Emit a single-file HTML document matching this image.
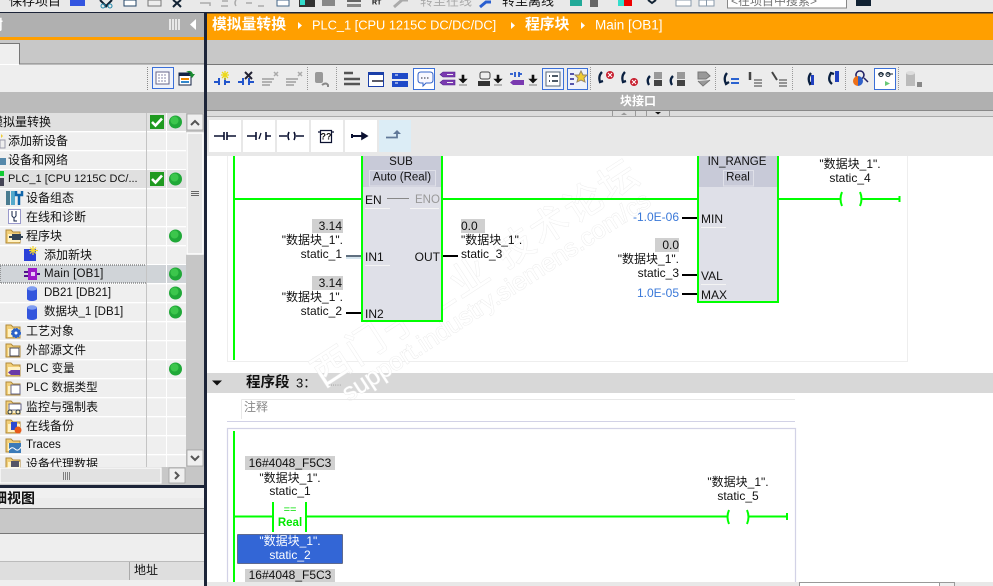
<!DOCTYPE html>
<html><head><meta charset="utf-8"><style>
html,body{margin:0;padding:0;background:#fff;overflow:hidden}
svg{display:block}
text{font-family:"Liberation Sans","Noto Sans CJK SC",sans-serif;font-size:12px;fill:#111;dominant-baseline:central}
.e{text-anchor:end}.m{text-anchor:middle}
.b{font-weight:bold}
</style></head><body>
<svg width="993" height="586" viewBox="0 0 993 586" xmlns="http://www.w3.org/2000/svg">
<defs>
<g id="dot"><circle r="6.5" fill="#20a838"/><circle cx="-1" cy="-1.5" r="4" fill="#3cc64c"/></g>
<g id="chk"><rect x="-7" y="-7" width="14" height="14" fill="#1f9a20"/><path d="M-5 0l3.5 3.500L5-3.500" stroke="#fff" stroke-width="2.600" fill="none"/></g>
<g id="fld"><path d="M0 2h5l2 2h7v11H0z" fill="#f2cf78" stroke="#b08a38"/><rect x="2" y="6" width="12" height="8" fill="#fff2c4"/></g>
<g id="db"><rect x="0" y="2" width="10" height="11" fill="#3355dd"/><ellipse cx="5" cy="13" rx="5" ry="2" fill="#3355dd"/><ellipse cx="5" cy="2.500" rx="5" ry="2.200" fill="#7f9cf0"/></g>
</defs>

<rect width="993" height="586" fill="#fff"/>
<!-- top bar -->
<rect width="993" height="12" fill="#e9e9e9"/>
<rect y="12" width="993" height="1.500" fill="#1c2438"/>
<text x="9" y="1" style="font-size:13px">保存项目</text>
<rect x="70" y="0" width="15" height="6" fill="#3355e0"/>
<path d="M100 0l7 7M112 0l-7 7" stroke="#123" stroke-width="2"/><circle cx="103" cy="6" r="2" fill="none" stroke="#28a" /><circle cx="110" cy="6" r="2" fill="none" stroke="#28a"/>
<rect x="124" y="0" width="12" height="6" fill="#fff" stroke="#246"/>
<rect x="148" y="0" width="13" height="6" fill="#eee" stroke="#777"/>
<path d="M173 0l4 3 4-3M177 3l-4 4M177 3l4 4" stroke="#123" stroke-width="2" fill="none"/>
<path d="M200 3h10v3M222 1h6M221 6h7M236 6q-2-3 0-6M246 3h6M258 6h6" stroke="#aaa" stroke-width="1.500" fill="none"/>
<rect x="277" y="0" width="12" height="6" fill="#fff" stroke="#468"/>
<rect x="299" y="0" width="16" height="7" fill="#333"/><rect x="300" y="0" width="5" height="5" fill="#3dc"/>
<rect x="322" y="0" width="13" height="6" fill="#888"/>
<rect x="347" y="0" width="14" height="2" fill="#666"/><rect x="347" y="4" width="14" height="3" fill="#888"/>
<text x="372" y="3" class="b" style="font-size:7px">RT</text>
<path d="M394 7l8-7h6" stroke="#aaa" stroke-width="3" fill="none"/>
<text x="420" y="1" style="font-size:13px;fill:#aaa">转至在线</text>
<path d="M480 7l6-5h5" stroke="#2a5fd0" stroke-width="3" fill="none"/>
<text x="502" y="1" style="font-size:13px">转至离线</text>
<rect x="570" y="0" width="12" height="6" fill="#2a9"/><rect x="590" y="0" width="8" height="7" fill="#666"/>
<rect x="618" y="0" width="13" height="6" fill="#3dc"/><rect x="624" y="0" width="8" height="6" fill="#e00"/>
<path d="M648 0l4 3 4-3" stroke="#123" stroke-width="2" fill="none"/>
<rect x="676" y="0" width="15" height="6" fill="#fff" stroke="#89a"/><rect x="699" y="0" width="15" height="6" fill="#fff" stroke="#89a"/><path d="M706.500 0v6" stroke="#89a"/>
<rect x="727.500" y="-2" width="119" height="10" fill="#fff" stroke="#888"/>
<text x="731" y="1" style="font-size:12px;fill:#777">&lt;在项目中搜索&gt;</text>
<rect x="856" y="0" width="15" height="6" fill="#123"/>

<!-- left header -->
<rect y="13" width="204" height="24" fill="#b0b0b0"/>
<rect y="37" width="204" height="3" fill="#ff9f00"/>
<text x="-11" y="25" class="b" style="font-size:14px;fill:#fff">树</text>
<g fill="#e8e8e8"><rect x="169" y="19" width="2" height="11"/><rect x="172" y="19" width="2" height="11"/><rect x="175" y="19" width="2" height="11"/><rect x="178" y="19" width="2" height="11"/></g>
<path d="M196 19v11l-6-5.500z" fill="#fff"/>
<rect y="40" width="204" height="24" fill="#c8c8c8"/>
<rect y="43" width="19" height="21" fill="#efefef"/>
<path d="M0 43.500h19.500V64H204" stroke="#777" fill="none"/>
<rect y="65" width="204" height="27" fill="#eeeeee"/>
<path d="M147.500 67v23" stroke="#888" stroke-dasharray="1 1"/>
<rect x="152.500" y="67.500" width="21" height="21" fill="#eef2fa" stroke="#3a6fd8"/>
<rect x="156" y="72" width="13" height="12" fill="#fff" stroke="#668"/><path d="M158 75h9M158 78h9M158 81h9" stroke="#88a" stroke-dasharray="2 1"/>
<rect x="179" y="73" width="12" height="12" fill="#fff" stroke="#124"/><rect x="179" y="73" width="12" height="3" fill="#124"/><rect x="181" y="78" width="8" height="2" fill="#e80"/><rect x="181" y="81" width="8" height="2" fill="#38c"/>
<path d="M186 72q5-3 7 2h2l-3 4-3-4h2q-2-2-5-2z" fill="#1a8a30"/>
<rect y="92" width="204" height="21" fill="#bbbbbb"/>

<!-- tree -->
<rect y="113" width="186" height="354" fill="#efefef"/>
<g fill="#fff">
<rect y="131" width="186" height="1.300"/><rect y="150" width="186" height="1.300"/><rect y="169" width="186" height="1.300"/><rect y="188" width="186" height="1.300"/><rect y="207" width="186" height="1.300"/><rect y="226" width="186" height="1.300"/><rect y="245" width="186" height="1.300"/><rect y="264" width="186" height="1.300"/><rect y="283" width="186" height="1.300"/><rect y="302" width="186" height="1.300"/><rect y="321" width="186" height="1.300"/><rect y="340" width="186" height="1.300"/><rect y="359" width="186" height="1.300"/><rect y="378" width="186" height="1.300"/><rect y="397" width="186" height="1.300"/><rect y="416" width="186" height="1.300"/><rect y="435" width="186" height="1.300"/><rect y="454" width="186" height="1.300"/>
</g>
<rect y="113" width="186" height="18" fill="#e0e0e0"/>
<rect y="170" width="186" height="18" fill="#e0e0e0"/>
<rect y="265" width="147" height="18" fill="#d0d4d8" stroke="#555" stroke-dasharray="1 1"/>
<rect x="147" y="265" width="39" height="18" fill="#d0d4d8"/>
<path d="M146.500 113v354" stroke="#c4c4c4"/><path d="M166.500 113v354" stroke="#fff"/>
<text x="-9" y="122">模拟量转换</text>
<text x="8" y="141">添加新设备</text>
<text x="8" y="160">设备和网络</text>
<text x="8" y="179" style="font-size:11px">PLC_1 [CPU 1215C DC/...</text>
<text x="26" y="198">设备组态</text>
<text x="26" y="217">在线和诊断</text>
<text x="26" y="236">程序块</text>
<text x="44" y="255">添加新块</text>
<text x="44" y="274" style="font-size:11.500px;letter-spacing:.2px">Main [OB1]</text>
<text x="44" y="293" style="font-size:11.500px">DB21 [DB21]</text>
<text x="44" y="312" style="font-size:11.500px">数据块_1 [DB1]</text>
<text x="26" y="331">工艺对象</text>
<text x="26" y="350">外部源文件</text>
<text x="26" y="369" style="font-size:11.500px">PLC 变量</text>
<text x="26" y="388" style="font-size:11.500px">PLC 数据类型</text>
<text x="26" y="407">监控与强制表</text>
<text x="26" y="426">在线备份</text>
<text x="26" y="445" style="font-size:11.500px">Traces</text>
<text x="26" y="464">设备代理数据</text>
<rect y="467" width="186" height="18" fill="#c8c8c8"/>
<!-- tree icons -->
<path d="M1 134l2 2 -2 2z" fill="#ec3"/><rect x="0" y="140" width="5" height="8" fill="#eee" stroke="#99a"/>
<rect x="0" y="158" width="6" height="7" fill="#58a"/>
<rect x="0" y="171" width="4" height="5" fill="#1c3"/><rect x="0" y="178" width="4" height="8" fill="#445"/>
<rect x="6" y="191" width="4" height="14" fill="#4a7c90"/><rect x="11" y="191" width="4" height="14" fill="#5ac"/><path d="M16 191v4h3v10M22 191v4h-3" stroke="#16a" stroke-width="2.500" fill="none"/>
<rect x="8.500" y="209.500" width="12" height="14" fill="#fff" stroke="#99c"/><path d="M12 211v5q2 3 4 0v-5M14 218v3h3" stroke="#124" fill="none"/>
<use href="#fld" x="6" y="228"/><rect x="12" y="234" width="9" height="6" fill="#345"/><path d="M9 237h14" stroke="#345" stroke-width="2"/>
<rect x="24" y="249" width="12" height="12" fill="#2a40d8"/><path d="M33 246v9M29 250.500h9M30 247.500l6 6M36 247.500l-6 6" stroke="#f3d830" stroke-width="1.200"/>
<rect x="28" y="268" width="9" height="12" fill="#9a18c8"/><path d="M24 272h4M24 276h4M37 274h3" stroke="#50108c" stroke-width="2"/><rect x="31" y="272" width="4" height="4" fill="#e8c8f8"/>
<use href="#db" x="27" y="286"/><use href="#db" x="27" y="305"/>
<use href="#fld" x="6" y="323"/><circle cx="16" cy="333" r="4.500" fill="#2b62c8" stroke="#2b62c8" stroke-dasharray="2 1"/><circle cx="16" cy="333" r="1.500" fill="#fff"/>
<use href="#fld" x="6" y="342"/><rect x="10" y="348" width="9" height="8" fill="#fff" stroke="#445"/>
<use href="#fld" x="6" y="361"/><path d="M11 370h9v5h-9l-3-2.500z" fill="#6a3aa8"/>
<use href="#fld" x="6" y="380"/><rect x="11" y="385" width="9" height="9" fill="#fff" stroke="#668"/>
<use href="#fld" x="6" y="399"/><rect x="9" y="404" width="12" height="6" fill="#fff" stroke="#668"/><circle cx="10" cy="412" r="2" fill="none" stroke="#234"/><circle cx="18" cy="412" r="2" fill="none" stroke="#234"/>
<use href="#fld" x="6" y="418"/><rect x="11" y="422" width="6" height="8" fill="#2b4ad0"/><circle cx="18" cy="430" r="3.500" fill="#e85a18"/>
<use href="#fld" x="6" y="437"/><rect x="9" y="443" width="12" height="10" fill="#3a7ab8"/><path d="M9 450q3-4 6-1t6-2" stroke="#fff" fill="none"/>
<use href="#fld" x="6" y="456"/><rect x="11" y="461" width="8" height="6" fill="#556"/>
<use href="#chk" x="157" y="122"/><use href="#chk" x="157" y="179"/>
<use href="#dot" x="175.500" y="122"/><use href="#dot" x="175.500" y="179"/><use href="#dot" x="175.500" y="236"/><use href="#dot" x="175.500" y="274"/><use href="#dot" x="175.500" y="293"/><use href="#dot" x="175.500" y="312"/><use href="#dot" x="175.500" y="369"/>
<!-- scrollbars -->
<rect x="186" y="113" width="18" height="372" fill="#c6c6c6"/>
<rect x="187" y="114" width="16" height="16" fill="#efefef" stroke="#999" stroke-width=".7"/><path d="M191 125l4-4 4 4" stroke="#555" stroke-width="2" fill="none"/>
<rect x="187" y="133" width="16" height="121" fill="#e6e6e6" stroke="#fff" stroke-width="1.500"/>
<path d="M191 191.500h8M191 193.500h8M191 195.500h8" stroke="#666"/>
<rect x="187" y="450" width="16" height="16" fill="#efefef" stroke="#999" stroke-width=".7"/><path d="M191 456l4 4 4-4" stroke="#555" stroke-width="2" fill="none"/>
<rect x="0" y="468" width="161" height="15" fill="#e2e2e2" stroke="#fff" stroke-width="1.200"/>
<path d="M63.500 472v8M65.500 472v8M67.500 472v8M69.500 472v8" stroke="#666" stroke-width=".8"/>
<rect x="169" y="468" width="16" height="15" fill="#efefef" stroke="#999" stroke-width=".7"/><path d="M175 472l3.500 3.500-3.500 3.500" stroke="#555" stroke-width="2" fill="none"/>
<rect y="485" width="204" height="3" fill="#1c2438"/>
<!-- details -->
<rect y="488" width="204" height="20" fill="#ececec"/><rect y="488" width="204" height="10" fill="#f0f0f0"/>
<text x="-7" y="498" class="b" style="font-size:14px">细视图</text>
<rect y="508" width="204" height="25" fill="#c8c8c8"/>
<path d="M0 508.500h204M0 533.500h204" stroke="#777"/>
<rect y="534" width="204" height="27" fill="#eeeeee"/>
<rect y="562" width="204" height="18" fill="#dedede"/><rect y="561" width="204" height="1" fill="#bbb"/><path d="M129.500 562v18" stroke="#aaa"/>
<text x="134" y="570">地址</text>
<rect y="580" width="204" height="6" fill="#efefef"/>
<rect x="204" y="13" width="3" height="573" fill="#1c2438"/>

<!-- right header -->
<rect x="207" y="13.500" width="786" height="26.500" fill="#ff9f00"/>
<text x="212" y="25" class="b" style="font-size:14.800px;fill:#fff">模拟量转换</text>
<path d="M298 22v7l4-3.500zM511 22v7l4-3.500zM581 22v7l4-3.500z" fill="#fff"/>
<text x="312" y="25" style="fill:#fff;font-size:12.800px">PLC_1 [CPU 1215C DC/DC/DC]</text>
<text x="525" y="25" class="b" style="font-size:14.800px;fill:#fff">程序块</text>
<text x="595" y="25" style="fill:#fff;font-size:13.500px">Main [OB1]</text>
<rect x="207" y="40" width="786" height="24" fill="#c8c8c8"/>
<rect x="207" y="64" width="786" height="1" fill="#777"/>
<rect x="207" y="65" width="786" height="27" fill="#ececec"/>
<!-- toolbar -->
<g fill="none">
<path d="M214 82h4M230 82h-4M219 78v7M225 78v7" stroke="#2255cc" stroke-width="2"/><path d="M225 71v9M221 75h8M222 72l6 6M228 72l-6 6" stroke="#ecd818" stroke-width="1.300"/>
<path d="M238 82h4M254 82h-4M243 78v7M249 78v7" stroke="#2255cc" stroke-width="2"/><path d="M245 72l7 7M252 72l-7 7" stroke="#223" stroke-width="2"/>
<path d="M262 79h12M262 82h10M262 85h8M286 79h12M286 82h10M286 85h8" stroke="#aaa" stroke-width="1.800"/><path d="M274 72l4 4M278 72l-4 4M298 72l4 4M302 72l-4 4" stroke="#aaa" stroke-width="1.500"/>
<path d="M307.500 67v23M336.500 67v23" stroke="#999" stroke-dasharray="1 1"/>
<rect x="315" y="72" width="8" height="11" rx="2" fill="#999"/><path d="M322 85q4-3 6 0v2" stroke="#888" stroke-width="2"/>
<path d="M344 73h9M344 79h16M344 84h16" stroke="#555" stroke-width="2.500"/>
<rect x="368.500" y="72.500" width="15" height="14" stroke="#1a3fa8" fill="#fff"/><rect x="368" y="72" width="16" height="3" fill="#1a3fa8"/><path d="M372 81h11" stroke="#223" stroke-width="1.500"/>
<rect x="392" y="73" width="16" height="6" fill="#1f4ac8"/><rect x="392" y="81" width="16" height="6" fill="#1f4ac8"/><path d="M395 75h3M395 83h3" stroke="#fff"/>
<rect x="413.500" y="68.500" width="21" height="21" fill="#fff" stroke="#3a6fd8"/>
<path d="M418 75q0-3 3-3h9q3 0 3 3v5q0 3-3 3h-4l-3 3v-3h-2q-3 0-3-3z" fill="#f8f8ff" stroke="#3464c8"/><path d="M421 78h1.500M424 78h1.500M427 78h1.500" stroke="#223"/>
<path d="M443 72h12v5h-12l-3-2.500zM443 80h12v5h-12l-3-2.500z" fill="#7a3ab0" stroke="#50208c" stroke-width=".6"/><path d="M447 74.500h6M447 82.500h6" stroke="#eee"/>
<path d="M462 75v4h-3l4 4 4-4h-3v-4zM459 85h8M497 75v4h-3l4 4 4-4h-3v-4zM494 85h8M532 75v4h-3l4 4 4-4h-3v-4zM529 85h8" fill="#111" stroke="#111" stroke-width=".6"/>
<rect x="480" y="72" width="10" height="7" rx="2" fill="#eee" stroke="#444"/><rect x="478" y="81" width="12" height="5" fill="#333"/>
<path d="M510 74h3M522 74h-3M515 72v5M519 72v5" stroke="#2255cc" stroke-width="1.800"/><path d="M513 80h11v5h-11l-3-2.500z" fill="#7a3ab0"/>
<rect x="542.500" y="68.500" width="21" height="21" fill="#eef2fa" stroke="#3a6fd8"/><rect x="546" y="72" width="14" height="14" fill="#fff" stroke="#567"/><path d="M549 76h1M552 76h6M549 81h1M552 81h6" stroke="#123" stroke-width="1.500"/>
<rect x="567.500" y="68.500" width="20" height="21" fill="#eef2fa" stroke="#3a6fd8"/><path d="M570 74h4M570 79h4M570 84h4" stroke="#55a" stroke-width="2"/><path d="M581 71l2 4h4l-3 3 1 4-4-2-4 2 1-4-3-3h4z" fill="#f0cc30" stroke="#986"/>
<path d="M590.500 67v23M715.500 67v23M792.500 67v23M845.500 67v23M898.500 67v23" stroke="#999" stroke-dasharray="1 1"/>
<path d="M602 72q-4 4-2 10l3-1M625 72q-4 4-2 10l3-1M650 76q-4 4-1 9M673 76q-4 4-1 9M727 73q-4 5-1 11l3-2M811 73q-4 5-1 11l3-2M832 84q-5-4-1-11l3 1" stroke="#0a2040" stroke-width="2.300"/>
<circle cx="610" cy="75" r="4" fill="#c82030"/><circle cx="634" cy="82" r="4" fill="#c82030"/>
<path d="M608 73l4 4M612 73l-4 4M632 80l4 4M636 80l-4 4" stroke="#fff"/>
<rect x="654" y="72" width="8" height="7" fill="#999"/><rect x="654" y="80" width="8" height="6" fill="#444"/>
<rect x="677" y="72" width="8" height="7" fill="#999"/><rect x="677" y="80" width="8" height="6" fill="#444"/>
<path d="M698 72h8l4 4-4 3h-8zM698 81l5 5 7-6" fill="#999" stroke="#777"/>
<path d="M731 79h8M731 83h8" stroke="#2a62d0" stroke-width="2"/>
<path d="M750 72v8" stroke="#444" stroke-width="2.500"/><path d="M754 80h8M754 83h8M754 86h8" stroke="#888" stroke-width="1.700"/>
<path d="M772 72l5 8" stroke="#444" stroke-width="2"/><path d="M779 80h8M779 83h8M779 86h8" stroke="#888" stroke-width="1.700"/>
<rect x="811" y="75" width="3" height="10" fill="#2040c0"/>
<rect x="835" y="71" width="4" height="11" fill="#2040c0"/>
<path d="M860 71a4 4 0 1 1 -.1 0M864 78l4 4" stroke="#226" stroke-width="1.500"/><path d="M858 76a5 5 0 0 0 0 10z" fill="#ee7018"/><path d="M858 76a5 5 0 0 1 0 10z" fill="#3060c8"/>
<rect x="874.500" y="68.500" width="21" height="21" fill="#fff" stroke="#3a6fd8"/><path d="M878 74h6M887 74h6" stroke="#123"/><circle cx="881" cy="74.500" r="2" stroke="#123"/><circle cx="888" cy="74.500" r="2" stroke="#123"/><path d="M885 81v5l5-2.500z" fill="#6ac878"/>
<rect x="906" y="73" width="9" height="13" fill="#bbb"/><ellipse cx="910.500" cy="73" rx="4.500" ry="2" fill="#ddd"/><rect x="917" y="82" width="5" height="5" fill="#888"/>
</g>
<rect x="207" y="92" width="786" height="18" fill="#b0b0b0"/>
<text x="620" y="101" class="b" style="fill:#fff;font-size:12px">块接口</text>
<rect x="207" y="110" width="786" height="6" fill="#dcdcdc"/><path d="M207 110.500h786" stroke="#888"/><path d="M207 116.500h786" stroke="#aaa"/>
<path d="M612.500 111v5M635.500 111v5M646.500 111v5M669.500 111v5" stroke="#999"/><path d="M621 115l3-2.500 3 2.500z" fill="#999"/><path d="M655 112l3 2.500 3-2.500z" fill="#111"/>
<rect x="207" y="117" width="786" height="39" fill="#e8e8e8"/>
<g fill="#fff"><rect x="209" y="120" width="32" height="32"/><rect x="243" y="120" width="32" height="32"/><rect x="277" y="120" width="32" height="32"/><rect x="311" y="120" width="32" height="32"/><rect x="345" y="120" width="32" height="32"/></g>
<rect x="379" y="120" width="32" height="32" fill="#dcedf6"/>
<g stroke="#0a1030" stroke-width="1.600" fill="none">
<path d="M214 136h10M224 132v8M227 132v8M227 136h9"/>
<path d="M247 136h9M256 132v8M266 132v8M266 136h5"/><path d="M259 139l2-6" stroke-width="1.200"/>
<path d="M279 136h8M304 136h-8M289 132q-2 4 0 8M294 132q2 4 0 8" />
<path d="M320.500 130.500h11v12h-11zM318 132h2M332 132h2" stroke-width="1.200"/>
<path d="M352 134v4M352 136h10" stroke-width="2"/><path d="M362 133l5 3-5 3z" fill="#0a1030"/>
<path d="M386 137.500h11v-4" stroke="#607898" stroke-width="1.800"/><path d="M393 134l4-4 4 4z" fill="#607898" stroke="none"/>
</g>
<text x="326" y="136.500" class="m" style="font-size:9px;font-weight:bold">??</text>

<!-- canvas -->
<rect x="207" y="156" width="786" height="426" fill="#fff"/>
<rect x="207" y="582" width="786" height="4" fill="#e8e8e8"/>
<path d="M799.500 586v-3.500h155v3.500" fill="#fff" stroke="#999"/><path d="M939.500 586v-3.500h15v3.500" fill="#eee" stroke="#999"/>
<path d="M227.500 156v205.500h680V156" fill="none" stroke="#eee"/>

<!-- network 3 header -->
<rect x="207" y="373" width="786" height="20" fill="#d8d8d8"/>
<!-- watermark -->
<g transform="rotate(-33 320 380)" style="paint-order:stroke">
<text x="318" y="376" style="font-size:38px;fill:#fff;stroke:#ededed;stroke-width:1;letter-spacing:3px">西门子工业 技术论坛</text>
<text x="332" y="406" style="font-size:25px;fill:#fff;stroke:#e8e8e8;stroke-width:.8">support.industry.siemens.com/cs</text>
</g>
<path d="M212 380.500h10l-5 5z" fill="#111"/>
<text x="246" y="383" class="b" style="font-size:14.500px">程序段</text>
<text x="296" y="383" style="font-size:13px">3：</text>
<text x="328" y="383" style="font-size:8px;fill:#888">......</text>
<path d="M241.500 399.500V419M241.500 399.500H795" stroke="#e8e8e8" fill="none"/>
<text x="244" y="407" style="fill:#888">注释</text>
<path d="M227 421.500h568" stroke="#d2d2e6"/>
<path d="M227.500 582v-153.500h568V582" fill="none" stroke="#d2d2e6" stroke-width="1.200"/>

<!-- ladder net 2 -->
<g fill="none" stroke="#00ff00" stroke-width="2">
<path d="M234 156v204M234 199h127M443 199h254M779 199h61M862 199h38"/>
<path d="M842 192q-3 7 0 14M860 192q3 7 0 14" />
<path d="M899.500 196v6"/>
</g>
<rect x="362" y="156" width="80" height="165" fill="#dfe0e8"/>
<rect x="362" y="156" width="80" height="31" fill="#c8cad8"/>
<path d="M362 156v165h80V156" fill="none" stroke="#00ff00" stroke-width="2"/>
<rect x="369.500" y="170.500" width="66" height="15.500" fill="none" stroke="#dfe0e8"/>
<text x="401" y="162" class="m" style="font-size:11.500px">SUB</text>
<text x="402" y="177.500" class="m" style="font-size:11.500px">Auto (Real)</text>
<text x="365" y="200">EN</text><text x="415" y="200" style="fill:#999;font-size:11.500px">ENO</text>
<path d="M387 198.500h22" stroke="#888"/>
<path d="M365 208.500h25M410 208.500h29M365 265.500h25" stroke="#f4f4f4"/>
<text x="365" y="257">IN1</text><text x="440" y="257" class="e">OUT</text><text x="365" y="314">IN2</text>
<path d="M346 256h15" stroke="#607080" stroke-width="2"/><path d="M346 258h15" stroke="#c8dce8" stroke-width="1.500"/>
<path d="M346 313h15M443 256h15" stroke="#000" stroke-width="2"/>
<rect x="312" y="219" width="31" height="14" fill="#d0d0d0"/><text x="342" y="226" class="e">3.14</text>
<text x="343" y="240" class="e">"数据块_1".</text><text x="342" y="254" class="e">static_1</text>
<rect x="312" y="276" width="31" height="14" fill="#d0d0d0"/><text x="342" y="283" class="e">3.14</text>
<text x="343" y="297" class="e">"数据块_1".</text><text x="342" y="311" class="e">static_2</text>
<rect x="461" y="219" width="24" height="14" fill="#d0d0d0"/><text x="461" y="226">0.0</text>
<text x="461" y="240">"数据块_1".</text><text x="461" y="254">static_3</text>

<rect x="698" y="156" width="80" height="146" fill="#dfe0e8"/>
<rect x="698" y="156" width="80" height="31" fill="#c8cad8"/>
<path d="M698 156v146h80V156" fill="none" stroke="#00ff00" stroke-width="2"/>
<rect x="723.500" y="170.500" width="30" height="15.500" fill="none" stroke="#dfe0e8"/>
<text x="737" y="162" class="m" style="font-size:11.500px">IN_RANGE</text>
<text x="738" y="177.500" class="m" style="font-size:11.500px">Real</text>
<text x="701" y="219">MIN</text><text x="701" y="276">VAL</text><text x="701" y="295">MAX</text>
<path d="M701 227.500h25M701 284.500h25" stroke="#f4f4f4"/>
<path d="M682 218h15M682 275h15M682 294h15" stroke="#000" stroke-width="2"/>
<text x="679" y="217" class="e" style="fill:#3a78d8">-1.0E-06</text>
<rect x="655" y="238" width="24" height="14" fill="#d0d0d0"/><text x="679" y="245" class="e">0.0</text>
<text x="679" y="259" class="e">"数据块_1".</text><text x="679" y="273" class="e">static_3</text>
<text x="679" y="293" class="e" style="fill:#3a78d8">1.0E-05</text>
<text x="850" y="164" class="m">"数据块_1".</text><text x="850" y="178" class="m">static_4</text>

<!-- net 3 -->
<g fill="none" stroke="#00ff00" stroke-width="2">
<path d="M234 431v151M234 516.500h38M307 516.500h421M749 516.500h38M787 513v7"/>
<path d="M273 502v30M306 502v30"/>
<path d="M729 510q-3 7 0 14M747 510q3 7 0 14"/>
</g>
<rect x="245" y="456" width="90" height="14" fill="#d0d0d0"/><text x="290" y="463" class="m">16#4048_F5C3</text>
<text x="290" y="478" class="m">"数据块_1".</text><text x="290" y="491" class="m">static_1</text>
<text x="290" y="510" class="m" style="fill:#00e000;font-size:11px">==</text>
<text x="290" y="523" class="m b" style="fill:#00e800;font-size:11.500px">Real</text>
<rect x="237.500" y="534.500" width="105" height="29" fill="#3366d6" stroke="#223" stroke-dasharray="1 1"/>
<text x="290" y="541" class="m" style="fill:#fff">"数据块_1".</text><text x="290" y="555" class="m" style="fill:#fff">static_2</text>
<rect x="245" y="569" width="90" height="13" fill="#d0d0d0"/><text x="290" y="575" class="m">16#4048_F5C3</text>
<text x="738" y="482" class="m">"数据块_1".</text><text x="738" y="496" class="m">static_5</text>
</svg>
</body></html>
